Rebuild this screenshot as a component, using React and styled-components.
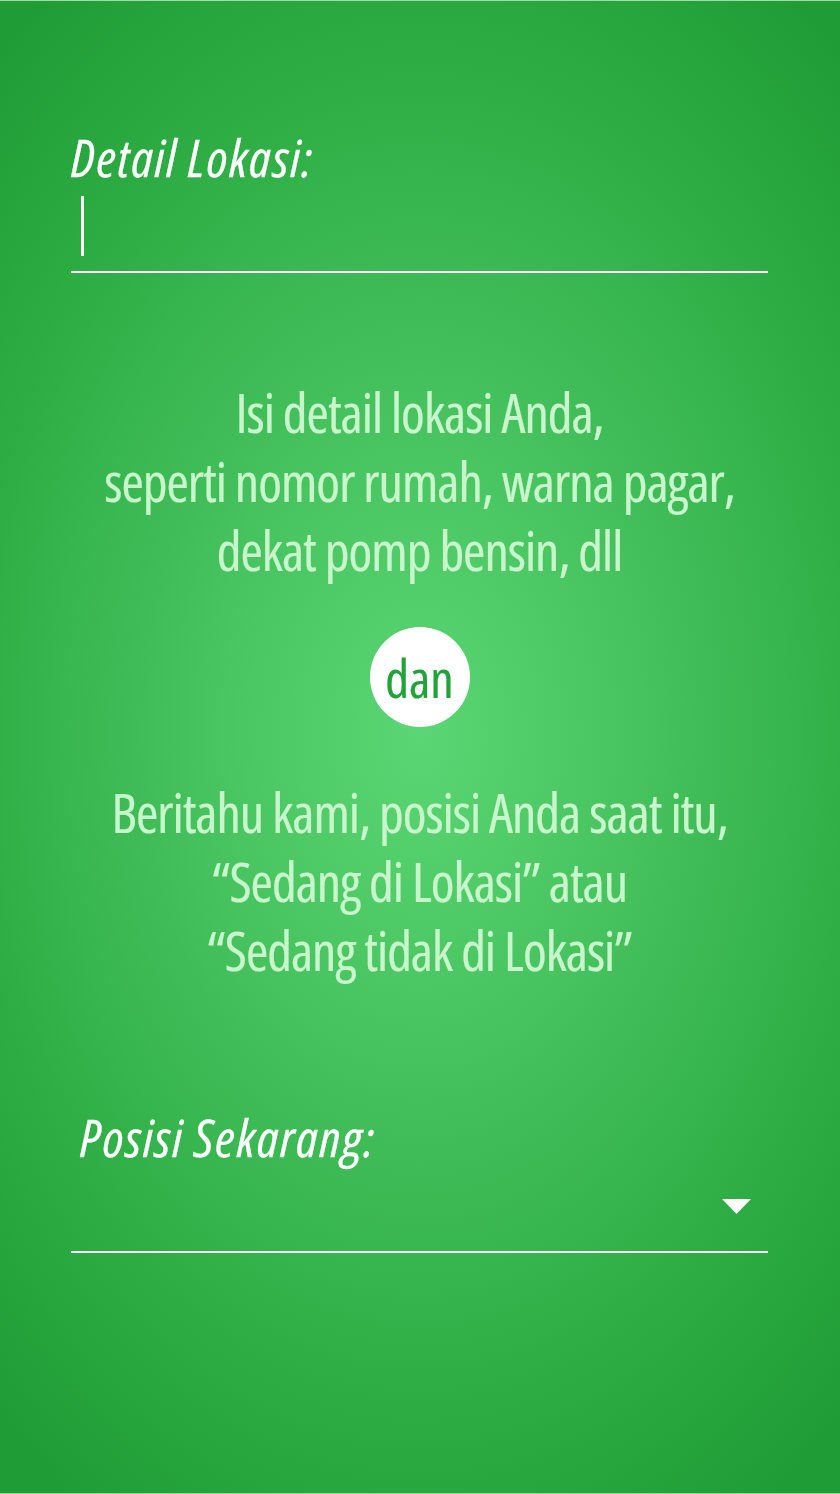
import React from "react";
import styled, { createGlobalStyle } from "styled-components";

const GlobalStyle = createGlobalStyle`
  html, body {
    margin: 0;
    padding: 0;
  }
  body {
    font-family: "Open Sans", "Roboto", sans-serif;
    font-stretch: 75%;
  }
`;

const Page = styled.div`
  box-sizing: border-box;
  width: 840px;
  height: 1494px;
  border-top: 1px solid #a3dcab;
  border-bottom: 1px solid #8fd89b;
  background: radial-gradient(
    ellipse 75% 62% at 50% 49%,
    #5bd674 0%,
    #46c25e 35%,
    #2fae46 70%,
    #1f9c35 100%
  );
  padding: 126px 72px 0 71px;
  display: flex;
  flex-direction: column;
`;

const Label = styled.div`
  color: #ffffff;
  font-style: italic;
  font-size: 52px;
  letter-spacing: ${(p) => p.spacing}px;
  line-height: 60px;
  -webkit-text-stroke: 0.3px #ffffff;
  padding-left: ${(p) => p.indent || 0}px;
  margin-top: ${(p) => p.mt || 0}px;
`;

const Field = styled.div`
  height: 84px;
  border-bottom: 2px solid #ffffff;
  display: flex;
  align-items: flex-start;
  justify-content: ${(p) => (p.select ? "flex-end" : "flex-start")};
  padding: ${(p) => (p.select ? "0 17px 0 0" : "0 0 0 10px")};
`;

const Caret = styled.span`
  display: block;
  width: 2.5px;
  height: 60px;
  margin-top: 9px;
  background: #ffffff;
`;

const Arrow = styled.svg`
  width: 29px;
  height: 15px;
  margin-top: 32px;
`;

const Message = styled.p`
  margin: ${(p) => p.mt}px 0 0;
  text-align: center;
  color: #c8f5cc;
  font-size: 54px;
  letter-spacing: -1px;
  line-height: 69px;
  -webkit-text-stroke: 0.2px #c8f5cc;
`;

const Dan = styled.div`
  align-self: center;
  width: 100px;
  height: 100px;
  border-radius: 50%;
  background: #ffffff;
  color: #22a33a;
  font-size: 52px;
  -webkit-text-stroke: 0.2px #22a33a;
  display: flex;
  align-items: center;
  justify-content: center;
  margin-top: 42px;
`;

export default function App() {
  return (
    <>
      <GlobalStyle />
      <Page>
        <Label spacing={1.6}>Detail Lokasi:</Label>
        <Field>
          <Caret />
        </Field>
        <Message mt={105}>
          Isi detail lokasi Anda,
          <br />
          seperti nomor rumah, warna pagar,
          <br />
          dekat pomp bensin, dll
        </Message>
        <Dan>dan</Dan>
        <Message mt={51}>
          Beritahu kami, posisi Anda saat itu,
          <br />
          “Sedang di Lokasi” atau
          <br />
          “Sedang tidak di Lokasi”
        </Message>
        <Label spacing={1.7} indent={9} mt={122}>
          Posisi Sekarang:
        </Label>
        <Field select>
          <Arrow viewBox="0 0 29 15">
            <polygon points="0,0 29,0 14.5,15" fill="#ffffff" />
          </Arrow>
        </Field>
      </Page>
    </>
  );
}
